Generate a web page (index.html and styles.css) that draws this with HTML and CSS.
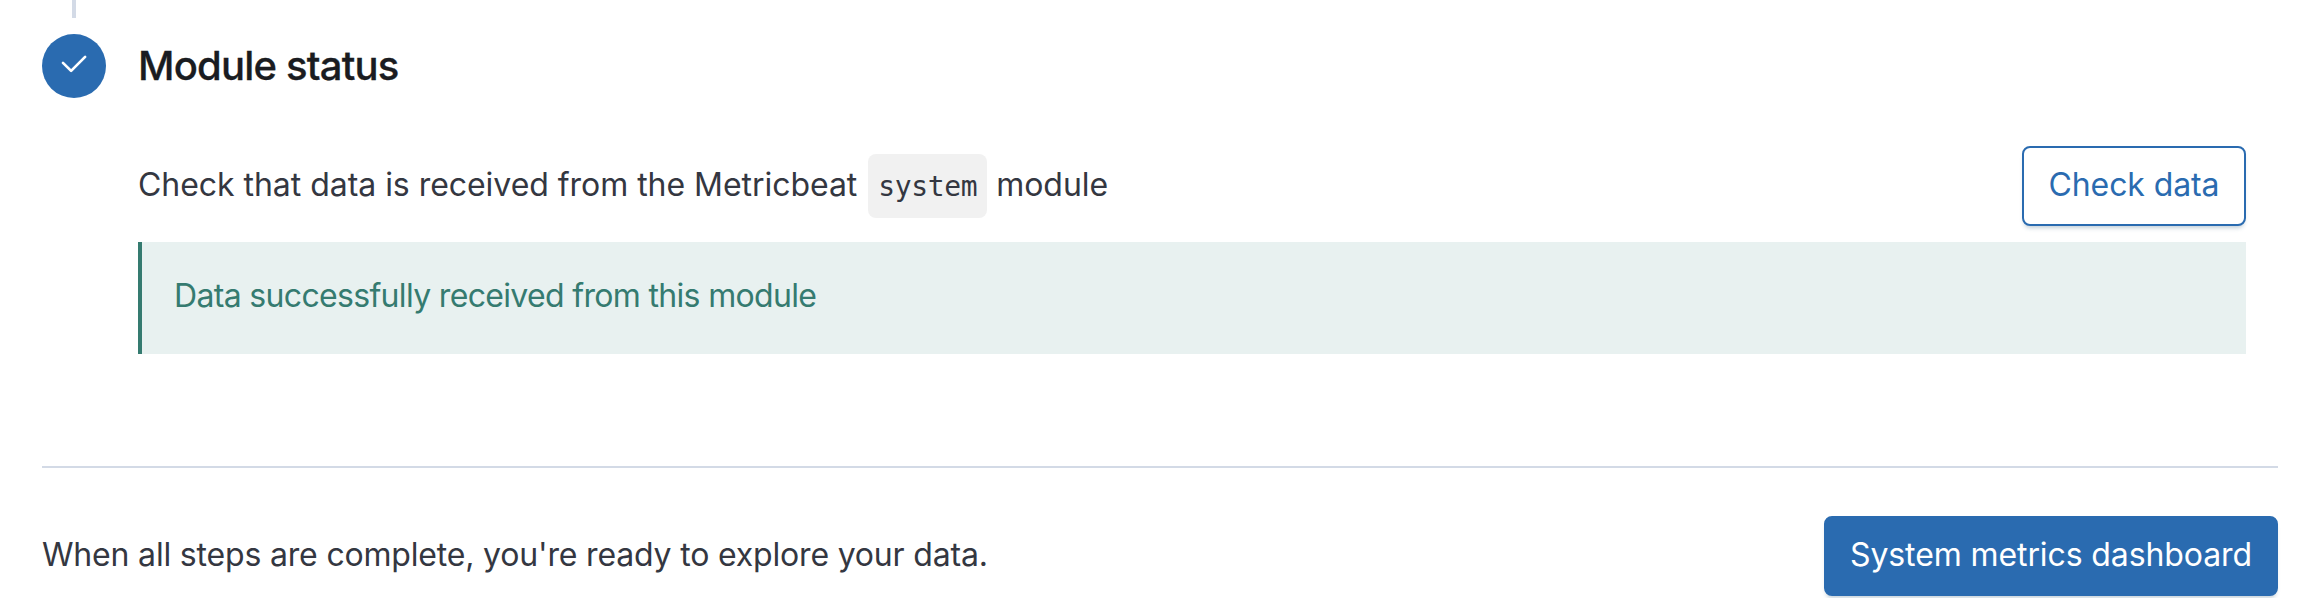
FILE: index.html
```html
<!DOCTYPE html>
<html lang="en">
<head>
<meta charset="utf-8">
<title>Module status</title>
<link rel="stylesheet" href="styles.css">
</head>
<body>
<main class="page">
  <section class="step">
    <div class="step-rail">
      <span class="step-line"></span>
      <span class="step-circle">
        <svg class="step-check" width="28" height="20" viewBox="0 0 28 20" fill="none" stroke="#fff" stroke-width="2.7" stroke-linecap="round" stroke-linejoin="round"><path d="M3 8.9 L11.1 16.9 L25.1 2.9"/></svg>
      </span>
    </div>
    <div class="step-main">
      <h2 class="step-title"><span>Module status</span></h2>
      <div class="check-row">
        <p class="text text-check"><span>Check that data is received from the Metricbeat </span><code class="code">system</code><span> module</span></p>
        <button class="button" type="button"><span>Check data</span></button>
      </div>
      <div class="callout"><span>Data successfully received from this module</span></div>
    </div>
  </section>
  <hr class="rule">
  <footer class="footer">
    <p class="text"><span>When all steps are complete, you're ready to explore your data.</span></p>
    <button class="button button-fill" type="button"><span>System metrics dashboard</span></button>
  </footer>
</main>
</body>
</html>
```

FILE: styles.css
```css
* { box-sizing: border-box; }
body {
  margin: 0;
  background: #fff;
  color: #343741;
  font: 400 32px/48px Inter, "Liberation Sans", sans-serif;
  letter-spacing: -0.18px;
  overflow: hidden;
}
.page { height: 598px; padding: 0 46px 0 42px; }
.step { display: flex; gap: 32px; height: 466px; padding-right: 32px; }
.step-rail {
  width: 64px;
  display: flex;
  flex-direction: column;
  align-items: center;
  gap: 16px;
}
.step-line { width: 4px; height: 18px; background: #d3dae6; }
.step-circle {
  width: 64px;
  height: 64px;
  border-radius: 50%;
  background: #2a6bb0;
  display: flex;
  justify-content: center;
  padding-top: 20px;
}
.step-check { flex: none; }
.step-main { flex: 1; padding-top: 34px; }
.step-title {
  margin: 0 0 48px;
  font-size: 40px;
  line-height: 63px;
  height: 64px;
  font-weight: 500;
  letter-spacing: -0.8px;
  color: #1a1c21;
  -webkit-text-stroke: 0.3px #1a1c21;
}
.check-row {
  display: flex;
  align-items: center;
  justify-content: space-between;
  height: 80px;
  margin: 0 0 16px;
}
.text { margin: 0; padding-bottom: 3px; white-space: pre; }
.text-check { letter-spacing: -0.04px; padding-bottom: 2px; }
.code {
  display: inline-block;
  height: 64px;
  margin: -8px 0 -8px 2px;
  padding: 0 10px;
  border-radius: 8px;
  background: #f1f1f1;
  font: 28px/66px "DejaVu Sans Mono", monospace;
  letter-spacing: -0.35px;
}
.button {
  height: 80px;
  padding: 0 0 3px;
  width: 224px;
  border: 2px solid #2a6bb0;
  border-radius: 8px;
  background: #fff;
  color: #2a6bb0;
  font: inherit;
  letter-spacing: -0.1px;
  box-shadow: 0 4px 4px -2px rgba(54, 97, 126, 0.3);
}
.button-fill { width: 454px; background: #2a6bb0; color: #fff; }
.callout {
  height: 112px;
  padding: 30px 32px;
  border-left: 4px solid #357b70;
  background: #e8f1f0;
  color: #357b70;
  letter-spacing: -0.67px;
}
.rule { height: 2px; margin: 0 0 48px; border: 0; background: #d3dae6; }
.footer {
  display: flex;
  align-items: center;
  justify-content: space-between;
  height: 80px;
}
```
